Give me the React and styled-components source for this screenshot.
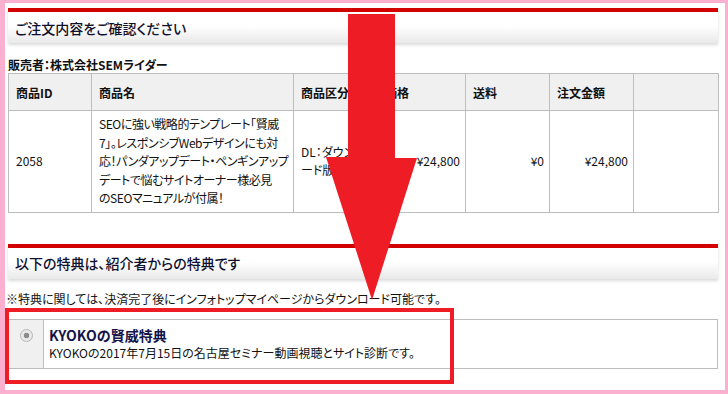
import React from "react";
import styled, { createGlobalStyle } from "styled-components";

const GlobalStyle = createGlobalStyle`
  html, body {
    margin: 0;
    padding: 0;
    background: #fbb0cf;
  }
  body {
    font-family: "Noto Sans CJK JP", "Noto Sans", sans-serif;
    color: #222;
  }
`;

const Stage = styled.div`
  position: relative;
  width: 728px;
  height: 394px;
  overflow: hidden;
  padding: 3px 0 0 5px;
  box-sizing: border-box;
`;

const Panel = styled.div`
  width: 720px;
  height: 387px;
  background: #fff;
  box-sizing: border-box;
  padding: 5px 7px 0 3px;
  display: flex;
  flex-direction: column;
`;

const SectionHead = styled.div`
  border-top: 4px solid #d30000;
  height: 31px;
  display: flex;
  align-items: center;
  padding-left: 7px;
  background: linear-gradient(to bottom, #fff 0%, #fff 45%, #e9e9e9 100%);
  box-shadow: 0 2px 3px rgba(0, 0, 0, 0.15);
  font-size: 14px;
  font-weight: 500;
  color: #10102e;
  font-feature-settings: "palt";
  margin-top: ${(p) => p.$top || 0}px;
`;

const Seller = styled.div`
  margin-top: 13px;
  height: 17px;
  line-height: 17px;
  font-size: 12px;
  font-weight: bold;
  color: #111;
  font-feature-settings: "palt";
`;

const Table = styled.table`
  border-collapse: collapse;
  table-layout: fixed;
  width: 710px;
  font-size: 12px;
  font-feature-settings: "palt";
`;

const Th = styled.th`
  border: 1px solid #bdbdbd;
  background: #f0f0f0;
  height: 36px;
  padding: 0 7px;
  text-align: left;
  font-weight: bold;
  color: #111;
`;

const Td = styled.td`
  border: 1px solid #bdbdbd;
  padding: 4px ${(p) => (p.$right ? "5px" : "4px")} 4px 7px;
  line-height: 18.5px;
  vertical-align: middle;
  text-align: ${(p) => (p.$right ? "right" : "left")};
  color: #111;
  white-space: ${(p) => (p.$lines ? "nowrap" : "normal")};
  letter-spacing: ${(p) => (p.$lines ? "-0.45px" : "normal")};
  overflow: hidden;
`;

const Note = styled.div`
  margin-top: 11px;
  margin-left: -2px;
  font-size: 12px;
  line-height: 17px;
  font-feature-settings: "palt";
  color: #111;
`;

const Bonus = styled.div`
  margin-top: 12px;
  width: 710px;
  height: 50px;
  box-sizing: border-box;
  border: 1px solid #bdbdbd;
  display: flex;
`;

const RadioCell = styled.div`
  width: 35px;
  background: #f0f0f0;
  border-right: 1px solid #bdbdbd;
  display: flex;
  justify-content: center;
  padding-top: 9px;
  box-sizing: border-box;
`;

const Radio = styled.span`
  width: 11px;
  height: 11px;
  border-radius: 50%;
  border: 1px solid #b4b4b4;
  background: radial-gradient(circle, #8a8a8a 0 2.5px, #e4e4e4 3px, #f4f4f4 100%);
`;

const BonusBody = styled.div`
  padding: 6px 0 0 5px;
  font-feature-settings: "palt";
`;

const BonusTitle = styled.div`
  font-size: 14px;
  font-weight: bold;
  line-height: 18px;
  color: #14144a;
`;

const BonusText = styled.div`
  font-size: 12px;
  line-height: 18px;
  color: #111;
`;

const Highlight = styled.div`
  position: absolute;
  left: 5px;
  top: 308px;
  width: 449px;
  height: 76px;
  box-sizing: border-box;
  border: 4px solid #ee1c25;
  pointer-events: none;
`;

const ArrowLayer = styled.svg`
  position: absolute;
  left: 0;
  top: 0;
  pointer-events: none;
`;

export default function App() {
  return (
    <Stage>
      <GlobalStyle />
      <Panel>
        <SectionHead>ご注文内容をご確認ください</SectionHead>
        <Seller>販売者：株式会社SEMライダー</Seller>
        <Table>
          <colgroup>
            <col style={{ width: 83 }} />
            <col style={{ width: 202 }} />
            <col style={{ width: 84 }} />
            <col style={{ width: 88 }} />
            <col style={{ width: 84 }} />
            <col style={{ width: 84 }} />
            <col style={{ width: 85 }} />
          </colgroup>
          <thead>
            <tr>
              <Th>商品ID</Th>
              <Th>商品名</Th>
              <Th>商品区分</Th>
              <Th>価格</Th>
              <Th>送料</Th>
              <Th>注文金額</Th>
              <Th />
            </tr>
          </thead>
          <tbody>
            <tr>
              <Td>2058</Td>
              <Td $lines>
                SEOに強い戦略的テンプレート「賢威
                <br />
                7」。レスポンシブWebデザインにも対
                <br />
                応！パンダアップデート・ペンギンアップ
                <br />
                デートで悩むサイトオーナー様必見
                <br />
                のSEOマニュアルが付属！
              </Td>
              <Td>DL：ダウンロード版</Td>
              <Td $right>¥24,800</Td>
              <Td $right>¥0</Td>
              <Td $right>¥24,800</Td>
              <Td />
            </tr>
          </tbody>
        </Table>
        <SectionHead $top={31}>以下の特典は、紹介者からの特典です</SectionHead>
        <Note>※特典に関しては、決済完了後にインフォトップマイページからダウンロード可能です。</Note>
        <Bonus>
          <RadioCell>
            <Radio />
          </RadioCell>
          <BonusBody>
            <BonusTitle>KYOKOの賢威特典</BonusTitle>
            <BonusText>KYOKOの2017年7月15日の名古屋セミナー動画視聴とサイト診断です。</BonusText>
          </BonusBody>
        </Bonus>
      </Panel>
      <Highlight />
      <ArrowLayer width="728" height="394" viewBox="0 0 728 394">
        <polygon
          points="348,14 395,14 395,158 417,158 372,300 326,157 348,157"
          fill="#ee1c25"
        />
      </ArrowLayer>
    </Stage>
  );
}
